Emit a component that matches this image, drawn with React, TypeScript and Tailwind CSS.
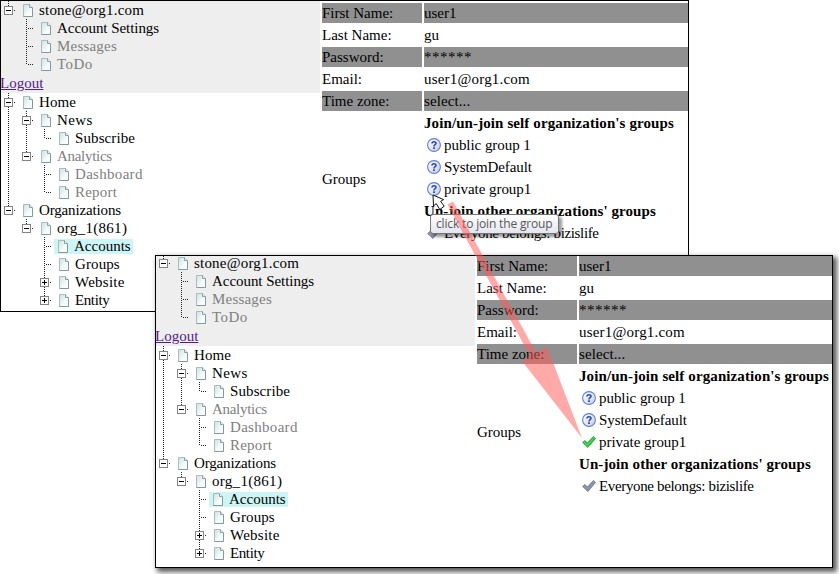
import React from "react";

type Gutter = "blank" | "line" | "tee" | "end" | "minus" | "minusEnd" | "plus" | "plusEnd";
type Node = { label: string; gutters: Gutter[]; muted?: boolean; selected?: boolean; tracking?: string };

const accountTree: Node[] = [
  { label: "stone@org1.com", gutters: ["minusEnd"], tracking: "tracking-[0.2px]" },
  { label: "Account Settings", gutters: ["blank", "tee"], tracking: "tracking-[-0.05px]" },
  { label: "Messages", gutters: ["blank", "tee"], muted: true, tracking: "tracking-[0.2px]" },
  { label: "ToDo", gutters: ["blank", "end"], muted: true, tracking: "tracking-[0.4px]" },
];

const siteTree: Node[] = [
  { label: "Home", gutters: ["minus"], tracking: "tracking-[0.1px]" },
  { label: "News", gutters: ["line", "minus"], tracking: "tracking-[0.4px]" },
  { label: "Subscribe", gutters: ["line", "line", "end"], tracking: "tracking-[0.1px]" },
  { label: "Analytics", gutters: ["line", "minusEnd"], muted: true, tracking: "tracking-[-0.3px]" },
  { label: "Dashboard", gutters: ["line", "blank", "tee"], muted: true, tracking: "tracking-[0.3px]" },
  { label: "Report", gutters: ["line", "blank", "end"], muted: true, tracking: "tracking-[0.2px]" },
  { label: "Organizations", gutters: ["minusEnd"], tracking: "tracking-[-0.15px]" },
  { label: "org_1(861)", gutters: ["blank", "minusEnd"], tracking: "tracking-[0.3px]" },
  { label: "Accounts", gutters: ["blank", "blank", "tee"], selected: true },
  { label: "Groups", gutters: ["blank", "blank", "tee"], tracking: "tracking-[0.1px]" },
  { label: "Website", gutters: ["blank", "blank", "plus"], tracking: "tracking-[0.25px]" },
  { label: "Entity", gutters: ["blank", "blank", "plusEnd"], tracking: "tracking-[-0.4px]" },
];

function GutterCell({ kind }: { kind: Gutter }) {
  const box = kind.startsWith("minus") || kind.startsWith("plus");
  const ends = kind === "end" || kind.endsWith("End");
  return (
    <svg width="18" height="18" className="block shrink-0" shapeRendering="crispEdges">
      {kind !== "blank" && (
        <path d={ends ? "M7.5 0V10" : "M7.5 0V18"} stroke="#222" strokeDasharray="1 1" />
      )}
      {kind !== "blank" && kind !== "line" && (
        <path d="M9 9.5H15" stroke="#222" strokeDasharray="1 1" />
      )}
      {box && (
        <>
          <rect x="3.5" y="5.5" width="8" height="8" fill="#fff" stroke="#848484" />
          <path d={kind.startsWith("plus") ? "M5 9.5H10M7.5 7V12" : "M5 9.5H10"} stroke="#000" />
        </>
      )}
    </svg>
  );
}

function PageIcon() {
  return (
    <svg width="11" height="13" viewBox="0 0 11 13" className="block shrink-0">
      <defs>
        <linearGradient id="sheet" x1="0" y1="0" x2="1" y2="1">
          <stop offset="0" stopColor="#cfe0df" />
          <stop offset="0.6" stopColor="#f4fafa" />
          <stop offset="1" stopColor="#fff" />
        </linearGradient>
      </defs>
      <path d="M.5.5H6.5L9.5 3.5V12.5H.5Z" fill="url(#sheet)" stroke="#a9bdbe" />
      <path d="M6.5.5V3.5H9.5" fill="#e3eeee" stroke="#8ba0a2" />
      <path d="M9.5 4V12.5H.5" fill="none" stroke="#829a9c" />
    </svg>
  );
}

function Tree({ nodes }: { nodes: Node[] }) {
  return (
    <div>
      {nodes.map((n) => (
        <div key={n.label} className="flex h-[18px]">
          {n.gutters.map((g, i) => (
            <GutterCell key={i} kind={g} />
          ))}
          <div
            className={
              n.selected
                ? "-ml-px mt-[2px] flex h-[15px] items-center bg-[#cdf5f5] pl-1 pr-[2px]"
                : "flex h-[18px] items-center pl-1"
            }
          >
            <PageIcon />
            <span
              className={`${n.muted ? "text-[#808080]" : "text-black"} ${
                n.selected ? "leading-[17px]" : "leading-[18px]"
              } ${n.tracking ?? ""} ml-[5px] whitespace-nowrap`}
            >
              {n.label}
            </span>
          </div>
        </div>
      ))}
    </div>
  );
}

function HelpIcon() {
  return (
    <svg width="14" height="14" viewBox="0 0 14 14" className="block shrink-0">
      <defs>
        <linearGradient id="disc" x1="0" y1="0" x2="1" y2="1">
          <stop offset="0" stopColor="#fff" />
          <stop offset="1" stopColor="#cdcddd" />
        </linearGradient>
      </defs>
      <circle cx="7" cy="7" r="6.4" fill="url(#disc)" stroke="#5b7fe0" strokeWidth="1.1" />
      <path d="M5 5.4C5 3.2 9 3.2 9 5.3C9 6.7 7 6.6 7 8.4" fill="none" stroke="#2749b8" strokeWidth="1.6" />
      <rect x="6.1" y="9.3" width="1.8" height="1.7" fill="#2749b8" />
    </svg>
  );
}

function CheckIcon({ active }: { active: boolean }) {
  return (
    <svg width="14" height="14" viewBox="0 0 14 14" className="block shrink-0">
      <path
        d="M.6 7.4L3 5.4L5.4 8L11.3 1.4L13.6 3.5L5.8 12.6Z"
        fill={active ? "#2fc044" : "#868ba5"}
        stroke={active ? "#239a34" : "#6d7189"}
        strokeWidth=".7"
        strokeLinejoin="round"
      />
      <path d="M2 7.1L5.5 10L11.4 3.1" fill="none" stroke={active ? "#62dc70" : "#9ca1b7"} strokeWidth=".9" />
    </svg>
  );
}

const fields = [
  ["First Name:", "user1", ""],
  ["Last Name:", "gu", ""],
  ["Password:", "******", "text-[15px]"],
  ["Email:", "user1@org1.com", "tracking-[0.2px]"],
  ["Time zone:", "select...", "tracking-[0.1px]"],
];

function GroupRow({ icon, label, tracking }: { icon: React.ReactNode; label: string; tracking?: string }) {
  return (
    <div className="flex h-[22px] items-center pl-[3px]">
      {icon}
      <span className={`${tracking ?? ""} ml-[3px] whitespace-nowrap`}>{label}</span>
    </div>
  );
}

function AccountForm({ joined }: { joined: boolean }) {
  return (
    <div className="flex min-w-0 grow flex-col gap-[2px] pl-[2px] pt-[2px] leading-5">
      {fields.map(([name, value, tracking], i) => (
        <div key={name} className="flex h-5 gap-[2px]">
          <div className={i % 2 ? "w-[100px]" : "w-[100px] bg-[#909090]"}>{name}</div>
          <div className={i % 2 ? "grow" : "grow bg-[#909090]"}>
            <span className={value === "******" ? "tracking-[0.5px]" : tracking}>{value}</span>
          </div>
        </div>
      ))}
      <div className="flex gap-[2px]">
        <div className="flex h-[132px] w-[100px] items-center">Groups</div>
        <div>
          <div className="h-[21px] whitespace-nowrap font-bold tracking-[0.1px]">
            Join/un-join self organization's groups
          </div>
          <GroupRow icon={<HelpIcon />} label="public group 1" tracking="tracking-[-0.05px]" />
          <GroupRow icon={<HelpIcon />} label="SystemDefault" tracking="tracking-[-0.1px]" />
          <GroupRow
            icon={joined ? <CheckIcon active /> : <HelpIcon />}
            label="private group1"
            tracking="tracking-[-0.05px]"
          />
          <div className="h-[22px] whitespace-nowrap font-bold leading-[22px] tracking-[0.08px]">
            Un-join other organizations' groups
          </div>
          <GroupRow
            icon={<CheckIcon active={false} />}
            label="Everyone belongs: bizislife"
            tracking="tracking-[-0.35px]"
          />
        </div>
      </div>
    </div>
  );
}

function Screen({ joined }: { joined: boolean }) {
  return (
    <div className="flex">
      <div className="w-[319px] shrink-0">
        <div className="h-[92px] bg-[#eee]">
          <Tree nodes={accountTree} />
          <div className="-ml-px h-5 leading-5">
            <span className="text-[#551a8b] underline">Logout</span>
          </div>
        </div>
        <Tree nodes={siteTree} />
      </div>
      <AccountForm joined={joined} />
    </div>
  );
}

export default function App() {
  return (
    <div className="relative h-[574px] w-[839px] overflow-hidden bg-white font-['Liberation_Serif',serif] text-[15px] text-black">
      <div className="absolute left-0 top-0 h-[312px] w-[689px] overflow-hidden border border-black bg-white">
        <Screen joined={false} />
      </div>

      <div className="absolute left-[430px] top-[214px] flex h-5 w-[129px] items-center whitespace-nowrap rounded-[3px] border border-[#767676] bg-gradient-to-b from-white to-[#e4e5f0] pl-[5px] font-['Open_Sans',sans-serif] text-[12px] tracking-[-0.16px] text-[#575757] shadow-[3px_3px_3px_rgba(0,0,0,0.4)]">
        click to join the group
      </div>
      <svg className="absolute left-[432px] top-[194px]" width="14" height="18" viewBox="0 0 14 18">
        <path
          d="M1 1L1.5 12L4.2 9.6L7.8 15.5L12.2 12.2L8.6 7.4L11.6 5.6Z"
          fill="#fff"
          stroke="#111"
          strokeWidth="1"
        />
      </svg>

      <div className="absolute left-[155px] top-[255px] h-[313px] w-[678px] overflow-hidden border border-black bg-white shadow-[3px_3px_5px_1px_rgba(0,0,0,0.65)]">
        <div className="-mt-[2px]">
          <Screen joined />
        </div>
      </div>

      <svg className="absolute left-0 top-0" width="839" height="574">
        <path
          d="M447.5 204.5L453 201.5L536 352.5L547 347L582 438L522 361L530 356Z"
          fill="#ff5a5a"
          fillOpacity="0.52"
        />
      </svg>
    </div>
  );
}
